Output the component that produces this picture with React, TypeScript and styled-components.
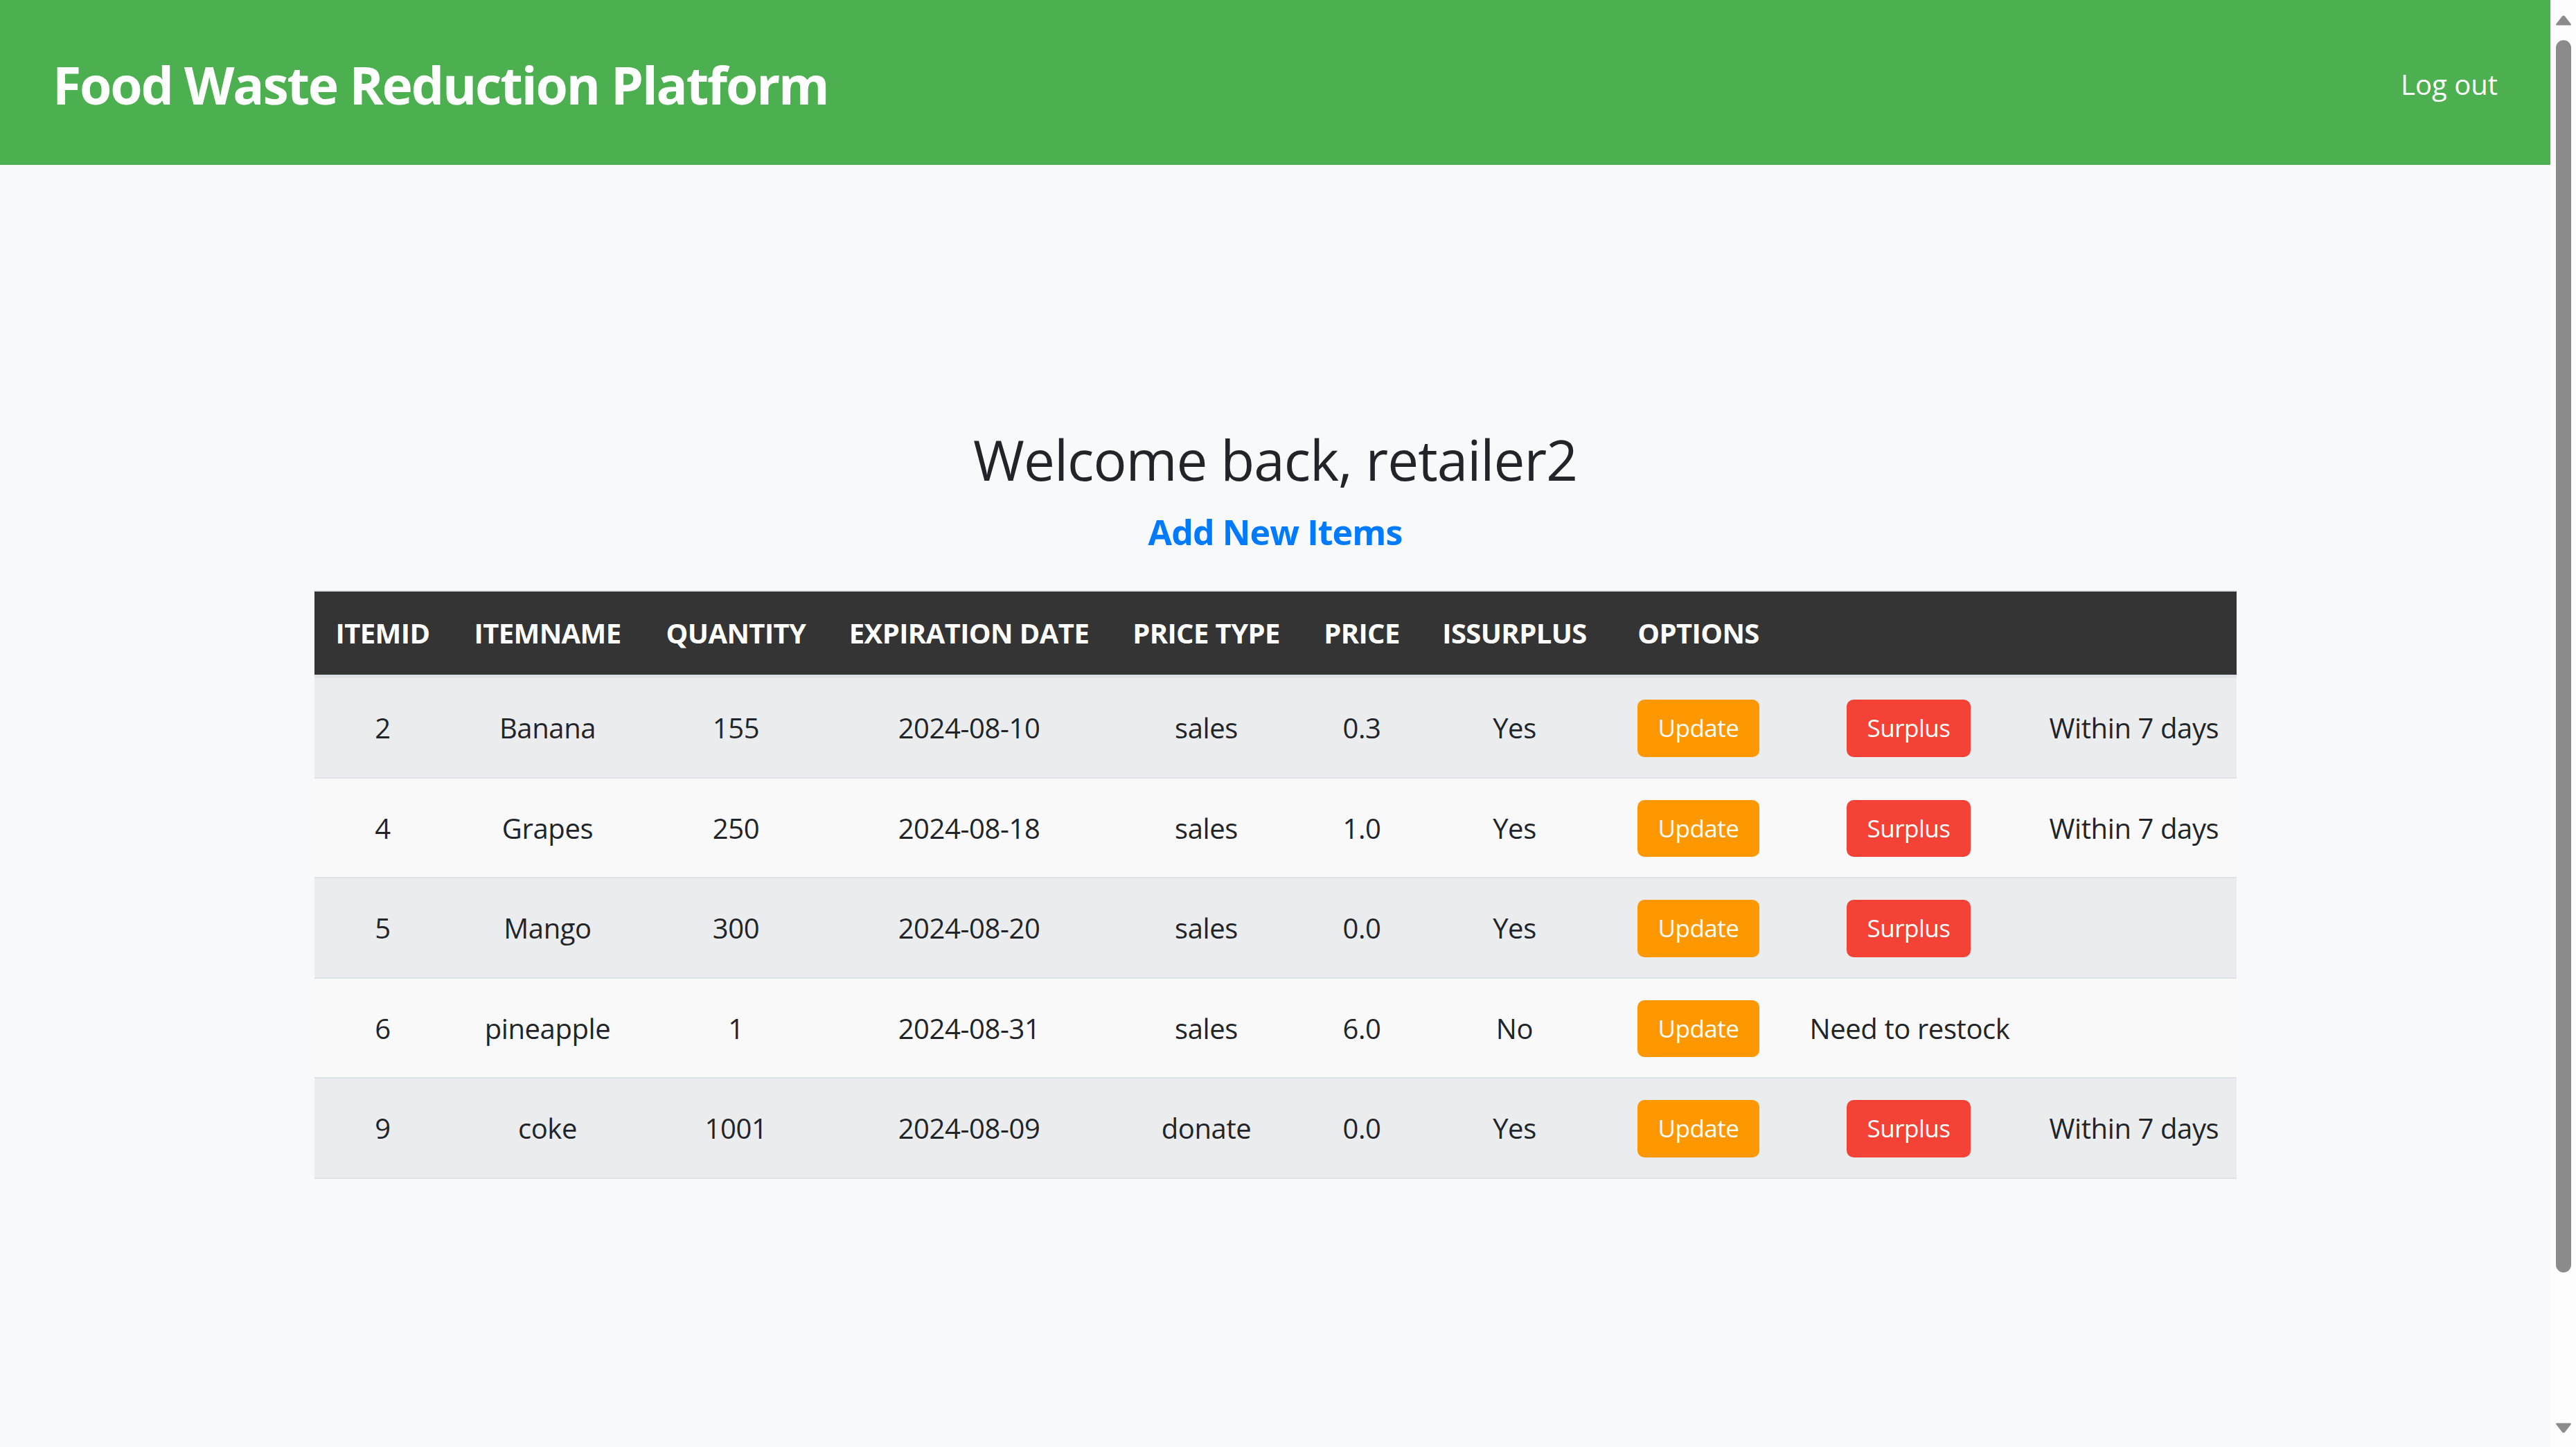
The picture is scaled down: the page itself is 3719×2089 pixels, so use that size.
import React from "react";
import styled, { createGlobalStyle } from "styled-components";

const GlobalStyle = createGlobalStyle`
  html, body {
    margin: 0;
    padding: 0;
    overflow: hidden;
    background: #f8f9fa;
  }
  body {
    font-family: "Open Sans", "Noto Sans", "Liberation Sans", sans-serif;
    color: #212529;
  }
  * { box-sizing: border-box; }
`;

const Viewport = styled.div`
  display: flex;
  height: 100vh;
  width: 100vw;
`;

const Page = styled.div`
  flex: 1;
  min-width: 0;
  display: flex;
  flex-direction: column;
  background: #f8f9fa;
`;

const Header = styled.header`
  height: 238px;
  flex-shrink: 0;
  background: #4caf50;
  display: flex;
  align-items: center;
  justify-content: space-between;
  padding: 6px 76px 0 76px;
`;

const Brand = styled.h1`
  margin: 0;
  font-size: 75px;
  font-weight: 700;
  color: #ffffff;
  letter-spacing: -2.2px;
`;

const LogOut = styled.a`
  color: #ffffff;
  font-size: 40px;
  text-decoration: none;
  cursor: pointer;
  margin-top: -2px;
`;

const Main = styled.main`
  display: flex;
  flex-direction: column;
  align-items: center;
  padding-top: 377px;
`;

const Welcome = styled.h2`
  margin: 0 0 20px 0;
  font-size: 80px;
  font-weight: 400;
  line-height: 96px;
  color: #212529;
  letter-spacing: -1px;
`;

const AddLink = styled.a`
  display: block;
  margin: 0 0 46px 0;
  font-size: 50px;
  font-weight: 700;
  line-height: 75px;
  color: #007bff;
  text-decoration: none;
  letter-spacing: -0.9px;
`;

const Table = styled.table`
  width: 2775px;
  border-collapse: collapse;
  table-layout: fixed;
`;

const Col = styled.col<{ $w: number }>`
  width: ${(p) => p.$w}px;
`;

const HeadRow = styled.tr`
  background: #343434;
`;

const Th = styled.th`
  padding: 30px;
  font-size: 40px;
  line-height: 60px;
  font-weight: 700;
  color: #ffffff;
  text-align: center;
  white-space: nowrap;
  text-transform: uppercase;
  letter-spacing: -0.6px;
  border-top: 2px solid #dee2e6;
  border-bottom: 5px solid #dee2e6;
`;

const Row = styled.tr<{ $striped: boolean }>`
  background: ${(p) => (p.$striped ? "#ebecee" : "#f9f9f9")};
`;

const Td = styled.td`
  padding: 31px 30px 29px 30px;
  font-size: 40px;
  line-height: 60px;
  text-align: center;
  vertical-align: middle;
  white-space: nowrap;
  color: #212529;
  letter-spacing: -0.4px;
  border-bottom: 2.5px solid #dee2e6;
`;

const ActionButton = styled.button<{ $tone: "update" | "surplus" }>`
  border: none;
  border-radius: 10px;
  padding: 15px 30px;
  font-family: inherit;
  font-size: 35px;
  line-height: 52.5px;
  letter-spacing: -0.5px;
  color: #ffffff;
  cursor: pointer;
  background: ${(p) => (p.$tone === "update" ? "#ff9800" : "#f44336")};
`;

const ScrollTrack = styled.div`
  width: 37px;
  flex-shrink: 0;
  background: #fdfdfd;
  display: flex;
  flex-direction: column;
  align-items: center;
  padding: 21px 0 19px 1px;
`;

const Arrow = styled.svg`
  display: block;
  flex-shrink: 0;
`;

const Thumb = styled.div`
  margin-top: 20px;
  width: 22px;
  height: 1779px;
  border-radius: 11px;
  background: #8b8b8b;
`;

const TrackSpacer = styled.div`
  flex: 1;
`;

type Item = {
  id: number;
  name: string;
  qty: number;
  date: string;
  type: string;
  price: string;
  surplus: boolean;
  note: string;
};

const items: Item[] = [
  { id: 2, name: "Banana", qty: 155, date: "2024-08-10", type: "sales", price: "0.3", surplus: true, note: "Within 7 days" },
  { id: 4, name: "Grapes", qty: 250, date: "2024-08-18", type: "sales", price: "1.0", surplus: true, note: "Within 7 days" },
  { id: 5, name: "Mango", qty: 300, date: "2024-08-20", type: "sales", price: "0.0", surplus: true, note: "" },
  { id: 6, name: "pineapple", qty: 1, date: "2024-08-31", type: "sales", price: "6.0", surplus: false, note: "" },
  { id: 9, name: "coke", qty: 1001, date: "2024-08-09", type: "donate", price: "0.0", surplus: true, note: "Within 7 days" },
];

const colWidths = [198, 278, 266, 407, 278, 171, 270, 261, 346, 300];

const headers = ["ITEMID", "ITEMNAME", "QUANTITY", "EXPIRATION DATE", "PRICE TYPE", "PRICE", "ISSURPLUS", "OPTIONS"];

export default function App() {
  return (
    <>
      <GlobalStyle />
      <Viewport>
        <Page>
          <Header>
            <Brand>Food Waste Reduction Platform</Brand>
            <LogOut>Log out</LogOut>
          </Header>
          <Main>
            <Welcome>Welcome back, retailer2</Welcome>
            <AddLink>Add New Items</AddLink>
            <Table>
              <colgroup>
                {colWidths.map((w, i) => (
                  <Col key={i} $w={w} />
                ))}
              </colgroup>
              <thead>
                <HeadRow>
                  {headers.map((h) => (
                    <Th key={h}>{h}</Th>
                  ))}
                  <Th colSpan={2} aria-hidden="true" />
                </HeadRow>
              </thead>
              <tbody>
                {items.map((it, i) => (
                  <Row key={it.id} $striped={i % 2 === 0}>
                    <Td>{it.id}</Td>
                    <Td>{it.name}</Td>
                    <Td>{it.qty}</Td>
                    <Td>{it.date}</Td>
                    <Td>{it.type}</Td>
                    <Td>{it.price}</Td>
                    <Td>{it.surplus ? "Yes" : "No"}</Td>
                    <Td>
                      <ActionButton $tone="update">Update</ActionButton>
                    </Td>
                    <Td>
                      {it.surplus ? (
                        <ActionButton $tone="surplus">Surplus</ActionButton>
                      ) : (
                        "Need to restock"
                      )}
                    </Td>
                    <Td>{it.note}</Td>
                  </Row>
                ))}
              </tbody>
            </Table>
          </Main>
        </Page>
        <ScrollTrack>
          <Arrow width="24" height="17" viewBox="0 0 24 17">
            <path d="M12 1.5 Q13.2 1.5 14 2.6 L22.6 13.4 Q23.6 15.5 21.4 15.5 L2.6 15.5 Q0.4 15.5 1.4 13.4 L10 2.6 Q10.8 1.5 12 1.5 Z" fill="#8b8b8b" />
          </Arrow>
          <Thumb />
          <TrackSpacer />
          <Arrow width="24" height="18" viewBox="0 0 24 18">
            <path d="M12 16.5 Q13.2 16.5 14 15.4 L22.6 4.6 Q23.6 2.5 21.4 2.5 L2.6 2.5 Q0.4 2.5 1.4 4.6 L10 15.4 Q10.8 16.5 12 16.5 Z" fill="#8b8b8b" />
          </Arrow>
        </ScrollTrack>
      </Viewport>
    </>
  );
}
